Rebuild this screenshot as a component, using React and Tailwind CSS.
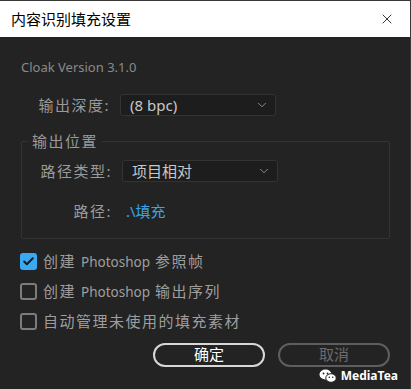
import { Check, ChevronDown, X } from "lucide-react";

const cjk = { fontFamily: '"Noto Sans", "Noto Sans CJK SC", sans-serif' };

function Select({ value }) {
  return (
    <div className="flex h-[22px] w-[156px] items-center justify-between rounded-[3px] border border-[#333333] bg-[#1d1d1d] pl-[9px] pr-[6px]">
      <span className="text-[15px] text-[#c8c8c8]">{value}</span>
      <ChevronDown size={14} strokeWidth={1.5} className="text-[#9a9a9a]" />
    </div>
  );
}

function Row({ label, children }) {
  return (
    <div className="flex items-center">
      <div className="w-[90px] text-right text-[15px] tracking-[1.5px] text-[#9a9a9a]">{label}</div>
      <div className="ml-[10px]">{children}</div>
    </div>
  );
}

function CheckRow({ checked, children }) {
  return (
    <div className="flex h-[30px] items-center gap-[6px]">
      {checked ? (
        <div className="flex h-[17px] w-[17px] items-center justify-center rounded-[3px] bg-[#3aa9f2]">
          <Check size={13} strokeWidth={3.5} className="text-[#1b1b1b]" />
        </div>
      ) : (
        <div className="h-[17px] w-[17px] rounded-[3px] border-2 border-[#7c7c7c]" />
      )}
      <span className="text-[15px] tracking-[1.5px] text-[#9e9e9e]">{children}</span>
    </div>
  );
}

function Latin({ children }) {
  return <span className="px-[5px] text-[13.5px] tracking-normal">{children}</span>;
}

function WeChat() {
  return (
    <svg width="18" height="14" viewBox="0 0 18 14">
      <ellipse cx="6.5" cy="5.5" rx="6" ry="5" fill="#ffffff" />
      <circle cx="4.5" cy="4.5" r="0.9" fill="#232323" />
      <circle cx="8.5" cy="4.5" r="0.9" fill="#232323" />
      <ellipse cx="12" cy="9" rx="5.2" ry="4.3" fill="#ffffff" stroke="#232323" strokeWidth="1" />
      <circle cx="10.3" cy="8.2" r="0.8" fill="#232323" />
      <circle cx="13.7" cy="8.2" r="0.8" fill="#232323" />
    </svg>
  );
}

export default function App() {
  return (
    <div className="relative h-[389px] w-[411px] overflow-hidden border-t border-r border-[#3a3a3a] bg-[#232323]" style={cjk}>
      {/* Title bar */}
      <div className="flex h-[36px] items-center justify-between bg-white pl-[11px] pr-[15px]">
        <span className="text-[15px] text-black">内容识别填充设置</span>
        <X size={16} strokeWidth={1.2} className="text-black" />
      </div>

      <div className="px-[20px] pt-[22px]">
        <div className="pl-[1px] text-[13px] leading-[16px] text-[#8a8a8a]">Cloak Version 3.1.0</div>

        <div className="mt-[19px]">
          <Row label="输出深度:">
            <Select value="(8 bpc)" />
          </Row>
        </div>

        {/* Output location group */}
        <div className="relative ml-[1px] mt-[24px] h-[98px] w-[369px] rounded-[2px] border border-[#333333]">
          <span className="absolute -top-[11px] left-[6px] bg-[#232323] px-[4px] text-[15px] leading-[20px] tracking-[1.5px] text-[#9a9a9a]">
            输出位置
          </span>
          <div className="flex flex-col pt-[18px]">
            <Row label="路径类型:">
              <Select value="项目相对" />
            </Row>
            <div className="mt-[17px]">
              <Row label="路径:">
                <span className="pl-[4px] text-[15px] text-[#3aa3ea]">.\填充</span>
              </Row>
            </div>
          </div>
        </div>

        <div className="mt-[8px] flex flex-col">
          <CheckRow checked>
            创建<Latin>Photoshop</Latin>参照帧
          </CheckRow>
          <CheckRow>
            创建<Latin>Photoshop</Latin>输出序列
          </CheckRow>
          <CheckRow>自动管理未使用的填充素材</CheckRow>
        </div>

        <div className="mt-[6px] flex justify-end gap-[13px]">
          <button className="h-[24px] w-[112px] rounded-full border-2 border-[#d8d8d8] text-[15px] leading-none text-white">
            确定
          </button>
          <button className="h-[24px] w-[112px] rounded-full border-2 border-[#5e5e5e] text-[15px] leading-none text-[#6c6c6c]">
            取消
          </button>
        </div>
      </div>

      {/* Watermark */}
      <div className="absolute bottom-[4px] right-[12px] flex items-center gap-[4px]">
        <WeChat />
        <span className="text-[12px] font-bold text-white">MediaTea</span>
      </div>
    </div>
  );
}
